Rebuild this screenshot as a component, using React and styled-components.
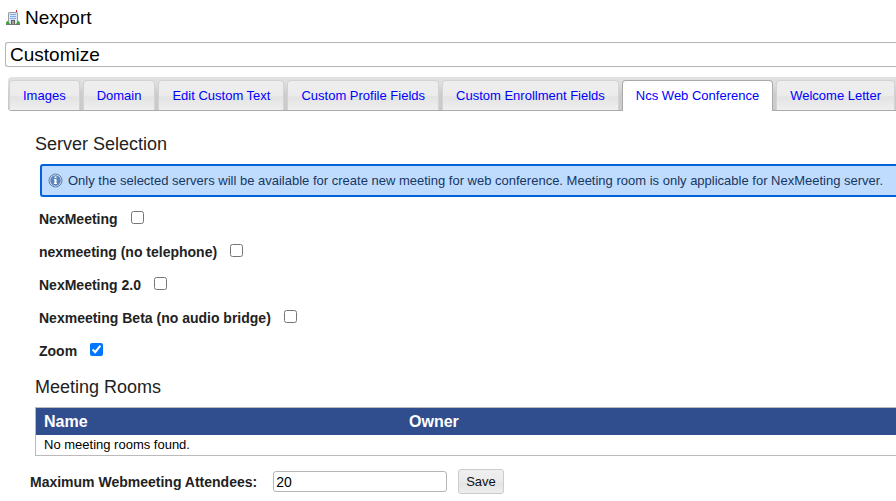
import React, { useState } from "react";
import styled, { createGlobalStyle, css } from "styled-components";

const GlobalStyle = createGlobalStyle`
  *, *::before, *::after { box-sizing: border-box; }
  body {
    margin: 0;
    background: #fff;
    color: #222;
    font-family: "Liberation Sans", Arial, sans-serif;
    font-size: 13px;
    overflow-x: hidden;
  }
`;

const Page = styled.div`
  display: flex;
  flex-direction: column;
`;

const Header = styled.header`
  display: flex;
  align-items: center;
  gap: 4px;
  height: 42px;
  padding: 0 5px 6px;
`;

const OrgName = styled.h1`
  margin: 0;
  font-size: 19px;
  line-height: 22px;
  font-weight: 400;
  color: #000;
`;

const TitleBar = styled.h2`
  margin: 0 0 10px 5px;
  padding: 0 4px;
  border: 1px solid #b5b5b5;
  border-right: 0;
  border-radius: 3px 0 0 3px;
  font-size: 19px;
  line-height: 23px;
  font-weight: 400;
  color: #000;
`;

const TabBar = styled.nav`
  display: flex;
  align-items: flex-start;
  gap: 3px;
  margin-left: 8px;
  padding: 3px 0 0 1px;
  overflow: hidden;
  border-radius: 4px 0 0 4px;
  background: linear-gradient(#e2e2e2 0%, #dedede 20%, #cccccc 50%, #cbcbcb 100%);
  box-shadow: inset 0 -1px 0 #aaa;
`;

const Tab = styled.a`
  flex: none;
  height: 30px;
  padding: 0 13px;
  border: 1px solid #d3d3d3;
  border-bottom: 0;
  border-radius: 4px 4px 0 0;
  background: linear-gradient(#eeeeee 0%, #ececec 48%, #e3e3e3 56%, #efefef 100%);
  font-size: 13px;
  line-height: 29px;
  color: #00f;
  text-decoration: none;
  white-space: nowrap;
  ${(p) =>
    p.$active &&
    css`
      height: 31px;
      border-color: #aaa;
      background: #fff;
    `}
`;

const Panel = styled.main`
  display: flex;
  flex-direction: column;
  padding: 22px 0 0 30px;
`;

const SectionTitle = styled.h3`
  margin: 0 0 0 5px;
  font-size: 18px;
  line-height: 22px;
  font-weight: 400;
`;

const Notice = styled.div`
  display: flex;
  align-items: center;
  gap: 5px;
  height: 33px;
  margin: 9px 0 5px 10px;
  padding-left: 6px;
  border: 2px solid #0063dc;
  border-right: 0;
  border-radius: 3px 0 0 3px;
  background: #bfdcff;
  color: #17375e;
  font-size: 13px;
  white-space: nowrap;
`;

const ServerList = styled.div`
  display: flex;
  flex-direction: column;
  margin: 0 0 9px 9px;
`;

const ServerRow = styled.div`
  display: flex;
  align-items: center;
  gap: 13px;
  height: 33px;
`;

const FieldLabel = styled.label`
  font-size: 14px;
  line-height: 16px;
  font-weight: 700;
`;

const Checkbox = styled.input`
  width: 13px;
  height: 13px;
  margin: 0 0 3px;
`;

const RoomTable = styled.table`
  width: calc(100% - 5px);
  margin: 9px 0 0 5px;
  border: 1px solid #bbb;
  border-right: 0;
  border-spacing: 0;
  table-layout: fixed;
`;

const HeadCell = styled.th`
  width: ${(p) => p.$width};
  height: 27px;
  padding: 0 8px;
  background: #304d8e;
  color: #fff;
  font-size: 16px;
  line-height: 18px;
  text-align: left;
`;

const Cell = styled.td`
  height: 20px;
  padding: 0 8px;
  color: #000;
  font-size: 13px;
  line-height: 16px;
`;

const SaveRow = styled.form`
  display: flex;
  align-items: center;
  gap: 11px;
  margin-top: 13px;
`;

const AttendeesField = styled.div`
  display: flex;
  align-items: center;
  gap: 16px;
`;

const NumberInput = styled.input`
  width: 174px;
  height: 21px;
  padding: 0 2px;
  border: 1px solid #b5b5b5;
  border-radius: 3px;
  background: #fff;
  color: #000;
  font: 14px "Liberation Sans", Arial, sans-serif;
`;

const SaveButton = styled.button`
  height: 25px;
  padding: 0 7px;
  border: 1px solid #ccc;
  border-radius: 3px;
  background: linear-gradient(#efefef 0%, #ebebeb 50%, #e4e4e4 56%, #eeeeee 100%);
  color: #111;
  font: 13px "Liberation Sans", Arial, sans-serif;
`;

const BuildingIcon = () => (
  <svg width="16" height="16" viewBox="0 0 16 16" aria-hidden="true">
    <path d="M11 0h1v3h-1z" fill="#c33" />
    <path d="M4 2h8l1 1v11H3V3z" fill="#959ca6" />
    <path d="M4 3h8v11H4z" fill="#dce8f8" />
    <path d="M5 4h6v1H5zM5 6h6v1H5zM5 8h6v1H5z" fill="#7fadef" />
    <path d="M6 10h4v4H6z" fill="#625f5d" />
    <path d="M7 11h2v3H7z" fill="#aba198" />
    <path d="M1 14v-1l1-2h1l2 3zM11 14l2-3h1l1 2v1z" fill="#45a33c" />
    <path d="M1 14h14v1H1z" fill="#6b7a6b" />
  </svg>
);

const InfoIcon = () => (
  <svg width="15" height="15" viewBox="0 0 15 15" aria-hidden="true">
    <circle cx="7.5" cy="7.5" r="6.5" fill="#cfdff2" stroke="#5f7fa8" />
    <circle cx="7.5" cy="7.5" r="5.2" fill="#5a86bd" />
    <path d="M6.5 3.500h2v1.500h-2zM6 6h2.500v4H9v1H6v-1h.5V7H6z" fill="#fff" />
  </svg>
);

const tabs = [
  "Images",
  "Domain",
  "Edit Custom Text",
  "Custom Profile Fields",
  "Custom Enrollment Fields",
  "Ncs Web Conference",
  "Welcome Letter",
];

const servers = [
  { id: "nexmeeting", name: "NexMeeting" },
  { id: "no-telephone", name: "nexmeeting (no telephone)" },
  { id: "nexmeeting-2", name: "NexMeeting 2.0" },
  { id: "beta", name: "Nexmeeting Beta (no audio bridge)" },
  { id: "zoom", name: "Zoom" },
];

export default function App() {
  const [activeTab, setActiveTab] = useState("Ncs Web Conference");
  return (
    <Page>
      <GlobalStyle />
      <Header>
        <BuildingIcon />
        <OrgName>Nexport</OrgName>
      </Header>
      <TitleBar>Customize</TitleBar>
      <TabBar>
        {tabs.map((tab) => (
          <Tab
            key={tab}
            href="#"
            $active={tab === activeTab}
            aria-current={tab === activeTab ? "page" : undefined}
            onClick={() => setActiveTab(tab)}
          >
            {tab}
          </Tab>
        ))}
      </TabBar>
      <Panel>
        <SectionTitle>Server Selection</SectionTitle>
        <Notice>
          <InfoIcon />
          <span>
            Only the selected servers will be available for create new meeting for web
            conference. Meeting room is only applicable for NexMeeting server.
          </span>
        </Notice>
        <ServerList>
          {servers.map((s) => (
            <ServerRow key={s.id}>
              <FieldLabel htmlFor={s.id}>{s.name}</FieldLabel>
              <Checkbox type="checkbox" id={s.id} defaultChecked={s.id === "zoom"} />
            </ServerRow>
          ))}
        </ServerList>
        <SectionTitle>Meeting Rooms</SectionTitle>
        <RoomTable>
          <thead>
            <tr>
              <HeadCell $width="365px">Name</HeadCell>
              <HeadCell>Owner</HeadCell>
            </tr>
          </thead>
          <tbody>
            <tr>
              <Cell colSpan={2}>No meeting rooms found.</Cell>
            </tr>
          </tbody>
        </RoomTable>
        <SaveRow onSubmit={(e) => e.preventDefault()}>
          <AttendeesField>
            <FieldLabel htmlFor="attendees">Maximum Webmeeting Attendees:</FieldLabel>
            <NumberInput id="attendees" type="text" defaultValue="20" />
          </AttendeesField>
          <SaveButton type="submit">Save</SaveButton>
        </SaveRow>
      </Panel>
    </Page>
  );
}
